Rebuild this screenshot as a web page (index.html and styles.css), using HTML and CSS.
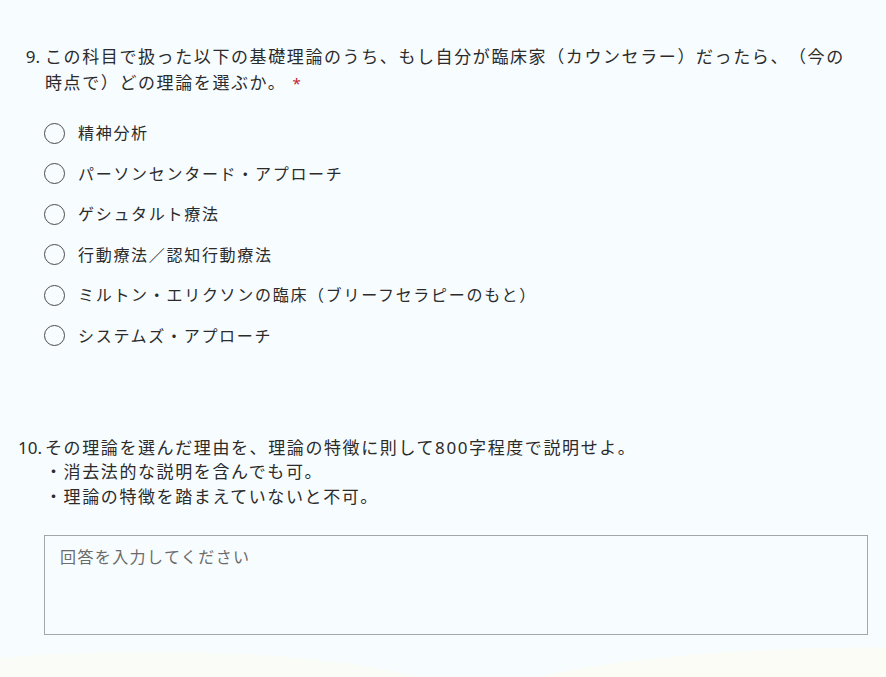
FILE: index.html
```html
<!DOCTYPE html>
<html lang="ja">
<head>
<meta charset="utf-8">
<title>Form</title>
<link rel="stylesheet" href="styles.css">
</head>
<body>
<main class="page">
  <section class="question q9">
    <div class="q-title">
      <span class="q-num">9.</span>
      <span class="q-text">この科目で扱った以下の基礎理論のうち、もし自分が臨床家（カウンセラー）だったら、（今の時点で）どの理論を選ぶか。<span class="req">*</span></span>
    </div>
    <div class="options">
      <label class="opt"><input type="radio" name="q9"><span>精神分析</span></label>
      <label class="opt"><input type="radio" name="q9"><span>パーソンセンタード・アプローチ</span></label>
      <label class="opt"><input type="radio" name="q9"><span>ゲシュタルト療法</span></label>
      <label class="opt"><input type="radio" name="q9"><span>行動療法／認知行動療法</span></label>
      <label class="opt"><input type="radio" name="q9"><span>ミルトン・エリクソンの臨床（ブリーフセラピーのもと）</span></label>
      <label class="opt"><input type="radio" name="q9"><span>システムズ・アプローチ</span></label>
    </div>
  </section>
  <section class="question q10">
    <div class="q-title">
      <span class="q-num">10.</span>
      <span class="q-text">その理論を選んだ理由を、理論の特徴に則して800字程度で説明せよ。<br>・消去法的な説明を含んでも可。<br>・理論の特徴を踏まえていないと不可。</span>
    </div>
    <textarea class="answer" placeholder="回答を入力してください"></textarea>
  </section>
</main>
</body>
</html>
```
FILE: styles.css
```css
html, body {
  margin: 0;
  padding: 0;
  height: 100%;
}
body {
  background-color: #f7fcff;
  background-image:
    radial-gradient(ellipse 700px 120px at 880px 720px, #fbfcf5 60%, rgba(251,252,245,0) 61%),
    radial-gradient(ellipse 500px 80px at 150px 700px, #fafcf8 60%, rgba(250,252,248,0) 61%);
  font-family: "Noto Sans", "Noto Sans CJK JP", sans-serif;
  color: #2b2b2b;
  overflow: hidden;
  text-spacing-trim: space-all;
}
.page {
  padding: 44px 26px 0 18px;
}
.q-title {
  display: flex;
  font-size: 17px;
  line-height: 26px;
  letter-spacing: 1.6px;
}
.q-num {
  width: 22px;
  flex: none;
  text-align: right;
  letter-spacing: 0;
  margin-right: 5px;
}
.q-text {
  flex: 1;
}
.req {
  color: #c4262e;
  margin-left: 6px;
  font-size: 15px;
}
.options {
  display: flex;
  flex-direction: column;
  gap: 16.6px;
  margin-top: 25px;
  padding-left: 26px;
}
.opt {
  display: flex;
  align-items: center;
  gap: 13px;
  font-size: 16px;
  line-height: 24px;
  letter-spacing: 1.7px;
  height: 24px;
}
.opt input {
  appearance: none;
  -webkit-appearance: none;
  margin: 0;
  width: 21px;
  height: 21px;
  border: 1.5px solid #4a4a4a;
  border-radius: 50%;
  background: transparent;
  flex: none;
}
.q10 {
  margin-top: 88px;
}
.q10 .q-title {
  line-height: 24.5px;
}
.answer {
  display: block;
  box-sizing: border-box;
  margin: 26px 0 0 26px;
  width: 824px;
  height: 100px;
  border: 1px solid #a3a7ab;
  border-radius: 0;
  background: transparent;
  padding: 8px 15px;
  font-family: "Noto Sans", "Noto Sans CJK JP", sans-serif;
  font-size: 16px;
  letter-spacing: 1.4px;
  resize: none;
}
.answer::placeholder {
  color: #6b6b6b;
}
```
